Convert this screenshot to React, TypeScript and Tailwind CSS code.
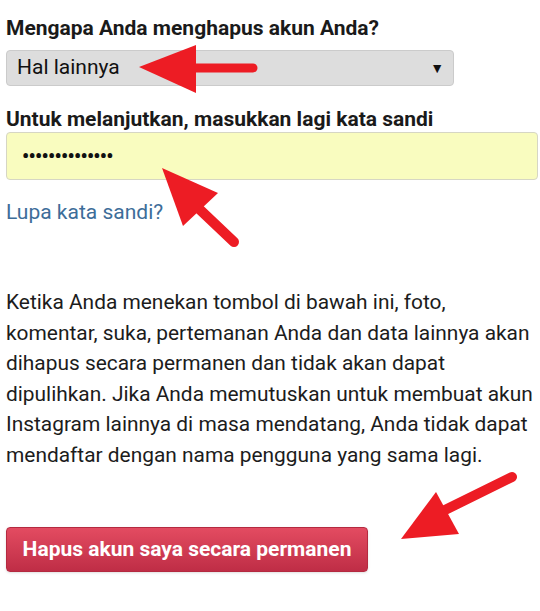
const font = { fontFamily: 'Roboto, "Noto Sans", sans-serif' };

function Arrows() {
  return (
    <svg className="pointer-events-none absolute inset-0" width="540" height="611" viewBox="0 0 540 611">
      <g fill="#ed1c24" stroke="#ed1c24" strokeLinecap="round">
        {/* pointer at the select */}
        <line x1="192" y1="68" x2="253" y2="68" strokeWidth="9" />
        <polygon points="139,67 196,45 196,93" stroke="none" />
        {/* pointer at the password field */}
        <line x1="195" y1="205" x2="234" y2="242" strokeWidth="10" />
        <polygon points="162,168 218,193 183,226" stroke="none" />
        {/* pointer at the delete button */}
        <line x1="445" y1="510" x2="512" y2="477" strokeWidth="10" />
        <polygon points="401,539 436,492 459,534" stroke="none" />
      </g>
    </svg>
  );
}

export default function App() {
  return (
    <div className="relative h-[611px] w-[540px] overflow-hidden bg-white text-[#1c1c1c]" style={font}>
      <div className="flex flex-col pt-[14px] pl-[6px]">
        <h2 className="text-[21px] leading-[28px] font-bold text-[#1a1a1a]">Mengapa Anda menghapus akun Anda?</h2>
        <div className="mt-2 flex h-[36px] w-[448px] items-center justify-between rounded-[4px] border border-[#cbcbcb] bg-[#dddddd] pr-[9px] pl-[10px]">
          <span className="text-[21px] text-[#111]">Hal lainnya</span>
          <span className="text-[14px] text-[#111]">▼</span>
        </div>
        <h2 className="mt-[20px] text-[21px] leading-[26px] font-bold text-[#1a1a1a]">
          Untuk melanjutkan, masukkan lagi kata sandi
        </h2>
        <div className="flex h-[48px] w-[532px] items-center rounded-[4px] border border-[#d6d6c4] bg-[#f9fcbf] pl-[15px]">
          <span className="text-[20px] font-bold tracking-[-0.7px] text-[#111]">••••••••••••••</span>
        </div>
        <a className="mt-[19px] text-[21px] leading-[26px] text-[#3d6d99]">Lupa kata sandi?</a>
        <p className="mt-[62px] text-[20.9px] leading-[30.5px] text-[#1c1c1c]">
          Ketika Anda menekan tombol di bawah ini, foto, komentar, suka, pertemanan Anda dan data lainnya akan dihapus
          secara permanen dan tidak akan dapat dipulihkan. Jika Anda memutuskan untuk membuat akun Instagram lainnya di
          masa mendatang, Anda tidak dapat mendaftar dengan nama pengguna yang sama lagi.
        </p>
        <div className="mt-[57px]">
          <button className="h-[45px] w-[362px] rounded-[4px] border border-[#b42a40] bg-gradient-to-b from-[#e34b61] to-[#bf2d46] text-[21px] font-bold text-white shadow-sm">
            Hapus akun saya secara permanen
          </button>
        </div>
      </div>
      <Arrows />
    </div>
  );
}
